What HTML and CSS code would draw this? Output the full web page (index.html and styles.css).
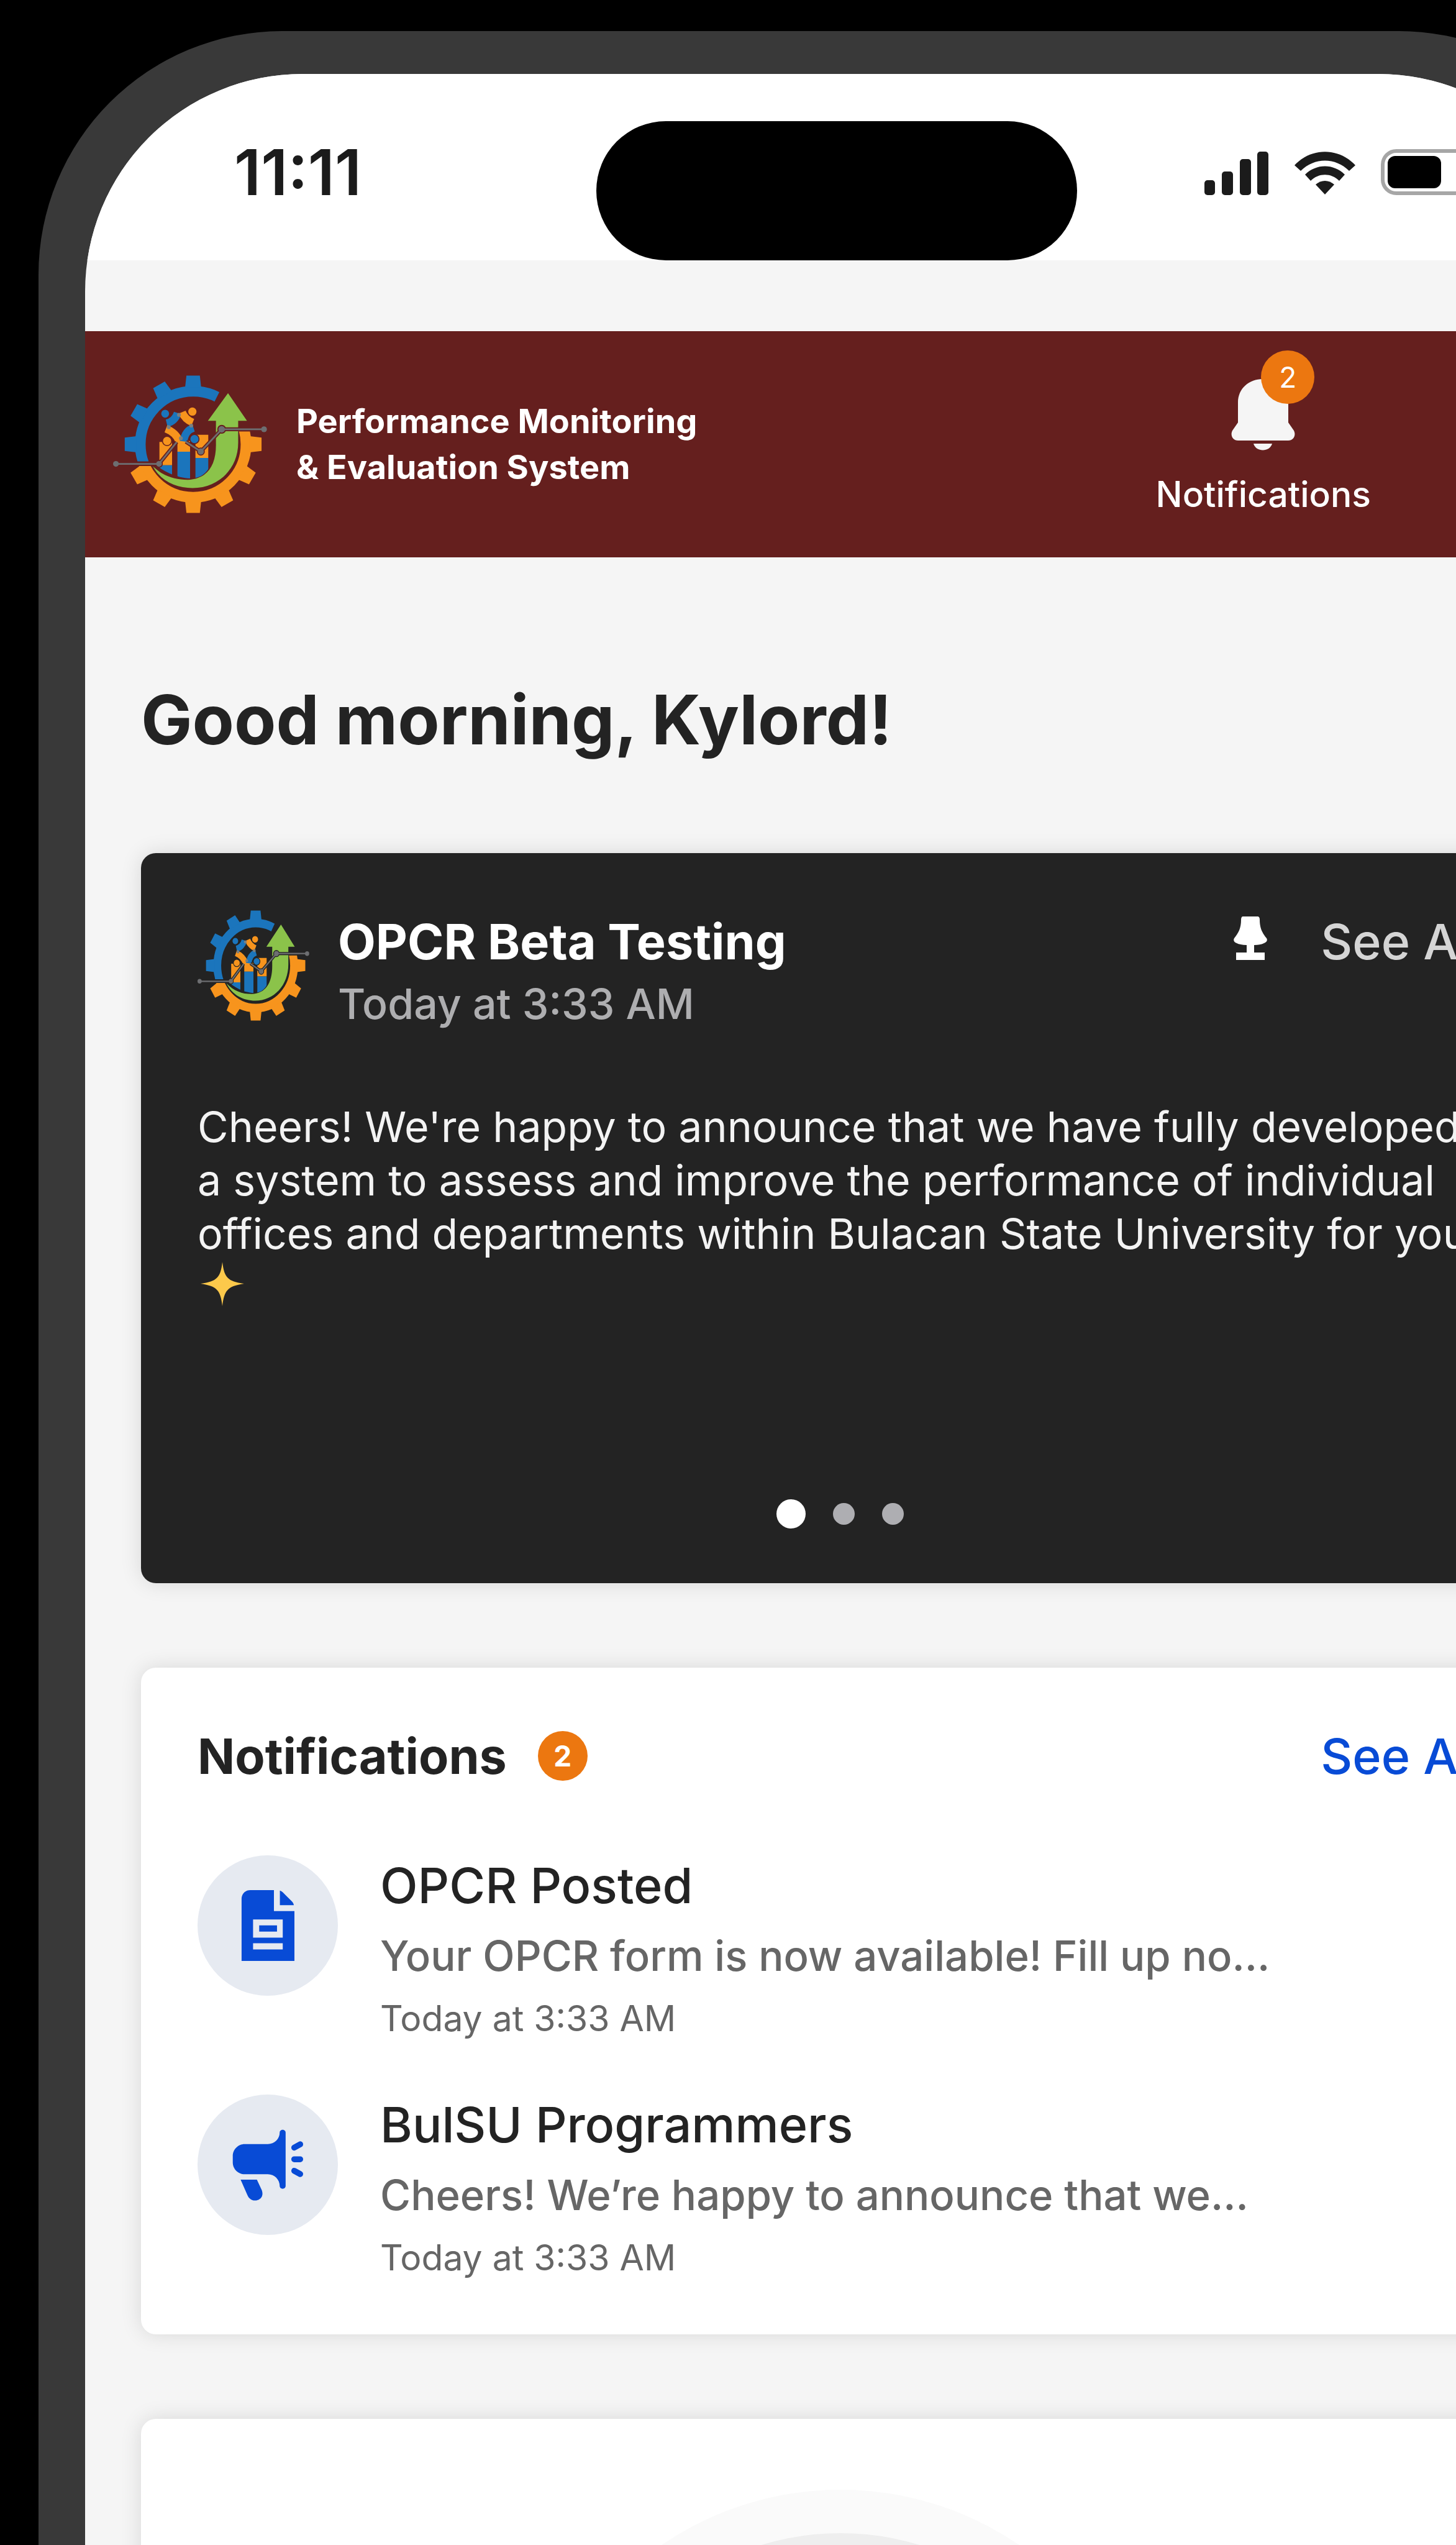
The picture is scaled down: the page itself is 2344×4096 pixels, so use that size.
FILE: index.html
```html
<!DOCTYPE html>
<html lang="en">
<head>
<meta charset="utf-8">
<meta name="viewport" content="width=device-width, initial-scale=1">
<title>Performance Monitoring &amp; Evaluation System</title>
<link rel="stylesheet" href="styles.css">
</head>
<body>
<svg class="defs" aria-hidden="true">
  <defs>
    <clipPath id="clip-blue"><path d="M0 0H693L468 447V537H0Z"/></clipPath>
    <clipPath id="clip-orange"><path d="M0 560H468V380H900V900H0Z"/></clipPath>
    <clipPath id="clip-bars"><path d="M280 380H560V555C530 612 495 624 452 625C400 622 340 605 280 560Z"/></clipPath>
    <path id="tooth" d="M433 90H503L510 152H426Z"/>
    <g id="logo">
      <g clip-path="url(#clip-blue)" fill="#1b75bc">
        <circle cx="468" cy="447" r="276" fill="none" stroke="#1b75bc" stroke-width="56"/>
        <use href="#tooth"/>
        <use href="#tooth" transform="rotate(-30 468 447)"/>
        <use href="#tooth" transform="rotate(-60 468 447)"/>
        <use href="#tooth" transform="rotate(-90 468 447)"/>
      </g>
      <g clip-path="url(#clip-orange)" fill="#f7941d">
        <circle cx="468" cy="447" r="276" fill="none" stroke="#f7941d" stroke-width="56"/>
        <use href="#tooth" transform="rotate(90 468 447)"/>
        <use href="#tooth" transform="rotate(120 468 447)"/>
        <use href="#tooth" transform="rotate(150 468 447)"/>
        <use href="#tooth" transform="rotate(180 468 447)"/>
        <use href="#tooth" transform="rotate(210 468 447)"/>
        <use href="#tooth" transform="rotate(240 468 447)"/>
      </g>
      <g clip-path="url(#clip-bars)">
        <path fill="#f7941d" d="M292 435H358V556H292ZM386 430H452V486H386ZM480 398H547V518H480Z"/>
        <path fill="#1b75bc" d="M292 556H358V640H292ZM386 486H452V640H386ZM480 518H547V640H480Z"/>
      </g>
      <g fill="none" stroke-width="40">
        <path stroke="#1b75bc" d="M387 284C378 312 362 330 330 338"/>
        <path stroke="#f7941d" d="M410 280C420 304 436 322 466 334"/>
        <path stroke="#f7941d" d="M326 366C362 380 384 402 396 432"/>
        <path stroke="#1b75bc" d="M470 362C440 372 424 392 418 432"/>
      </g>
      <g fill="#7b7f80">
        <circle cx="394" cy="294" r="10"/><circle cx="341" cy="358" r="10"/>
        <circle cx="458" cy="350" r="10"/><circle cx="404" cy="416" r="10"/>
      </g>
      <g class="logo-outline" stroke-width="5">
        <circle cx="322" cy="288" r="23" fill="#1b75bc"/><circle cx="464" cy="277" r="24" fill="#f7941d"/>
        <circle cx="332" cy="430" r="24" fill="#f7941d"/><circle cx="475" cy="420" r="24" fill="#1b75bc"/>
      </g>
      <path fill="#8bc34a" d="M258 562C310 612 370 632 440 632C540 628 590 560 587 440V325H545L650 181L749 325H703V440C703 575 600 675 465 675C380 675 300 640 258 562Z"/>
      <g class="logo-outline" fill="none" stroke-width="20">
        <path d="M290 549L382 436M430 434L508 485L617 369H720M240 549H290"/>
        <circle cx="290" cy="549" r="10"/><circle cx="508" cy="485" r="11"/><circle cx="617" cy="369" r="13"/>
      </g>
      <path fill="none" stroke="#6d6e71" stroke-width="9" d="M65 549H290L382 436M430 434L508 485L617 369H838"/>
      <g fill="#6d6e71">
        <circle cx="65" cy="549" r="15"/><circle cx="290" cy="549" r="15"/><circle cx="508" cy="485" r="16"/>
        <circle cx="617" cy="369" r="17"/><circle cx="838" cy="369" r="15"/>
      </g>
    </g>
  </defs>
</svg>

<div class="phone">
  <div class="screen">
    <div class="statusbar">
      <time class="clock">11:11</time>
      <div class="island"></div>
      <div class="indicators" aria-hidden="true">
        <svg width="104" height="70" viewBox="0 0 104 70" fill="#1b1b1b">
          <rect x="0" y="46" width="17" height="24" rx="5"/><rect x="28" y="32" width="18" height="38" rx="5"/>
          <rect x="57" y="12" width="18" height="58" rx="5"/><rect x="85" y="0" width="18" height="70" rx="5"/>
        </svg>
        <svg width="98" height="70" viewBox="0 0 98 70" fill="#1b1b1b">
          <path d="M0 22C27 -7 71 -7 98 22L88 31C66 9 32 9 10 31Z"/>
          <path d="M17 37C35 19 63 19 81 37L72 47C59 34 39 34 26 47Z"/>
          <path d="M34 53C43 45 55 45 64 53L49 69Z"/>
        </svg>
        <svg width="162" height="74" viewBox="0 0 162 74">
          <rect x="3" y="3" width="144" height="68" rx="22" fill="#fff" stroke="#a6a6a6" stroke-width="6"/>
          <rect x="11" y="11" width="86" height="52" rx="12"/>
          <path d="M154 25C165 31 165 43 154 49Z" fill="#a6a6a6"/>
        </svg>
      </div>
    </div>

    <header class="appbar">
      <a class="brand" href="#">
        <svg class="brand-logo" viewBox="50 88 804 718" preserveAspectRatio="none" aria-hidden="true"><use href="#logo"/></svg>
        <span class="brand-name">Performance Monitoring<br>&amp; Evaluation System</span>
      </a>
      <button class="nav-item" type="button">
        <span class="bell">
          <svg width="103" height="122" viewBox="0 -7 103 122" fill="#f5f5f5" aria-hidden="true">
            <path d="M51 0C29 0 11 15 11 38V70L2 83C-2 91 3 99 11 99H92C100 99 105 91 101 83L92 70V38C92 15 74 0 51 0Z"/>
            <path d="M36 104H66C62 118 40 118 36 104Z"/>
          </svg>
          <span class="badge bell-badge">2</span>
        </span>
        <span>Notifications</span>
      </button>
    </header>

    <main class="content">
      <h1 class="greeting">Good morning, Kylord!</h1>

      <section class="card announcement">
        <div class="post-head">
          <svg class="post-logo" viewBox="50 88 804 718" preserveAspectRatio="none" aria-hidden="true"><use href="#logo"/></svg>
          <div class="post-meta">
            <h2 class="title">OPCR Beta Testing</h2>
            <time class="post-time">Today at 3:33 AM</time>
          </div>
          <div class="post-actions">
            <svg width="54" height="80" viewBox="0 0 54 80" fill="#fff" aria-hidden="true">
              <path d="M15 0H38C41 0 42 2 42 5C42 19 46 26 53 35C56 40 51 45 33 46V58H50V70H4V58H21V46C3 45 -2 40 1 35C8 26 12 19 12 5C12 2 13 0 15 0Z"/>
            </svg>
            <a class="see-all see-all-light" href="#">See All</a>
          </div>
        </div>
        <p class="post-body">Cheers! We're happy to announce that we have fully developed<br>a system to assess and improve the performance of individual<br>offices and departments within Bulacan State University for you<br><svg class="star" width="76" height="75" viewBox="-5 -3 76 75" aria-hidden="true"><path fill="#fcc94b" d="M35 0C38 25 43 31 70 35C43 39 38 46 35 71C32 46 27 39 0 35C27 31 32 25 35 0Z"/></svg></p>
        <div class="dots">
          <button class="dot dot-active" type="button" aria-label="Announcement 1"></button>
          <button class="dot" type="button" aria-label="Announcement 2"></button>
          <button class="dot" type="button" aria-label="Announcement 3"></button>
        </div>
      </section>

      <section class="card notifications">
        <div class="section-head">
          <h2 class="title">Notifications</h2>
          <span class="badge section-badge">2</span>
          <a class="see-all" href="#">See All</a>
        </div>
        <ul class="list">
          <li class="item">
            <svg class="item-icon" viewBox="8 27 733 733" aria-hidden="true">
              <g fill="#084bd6">
                <path fill-rule="evenodd" d="M283 209H407V318H514V578H238V254C238 228 258 209 283 209ZM298 362V457H453V362ZM298 486V518H453V486Z"/>
                <path d="M330 393H423V425H330ZM438 211C444 213 449 216 454 221L501 268C506 273 509 279 511 287H438Z"/>
              </g>
            </svg>
            <div class="item-text">
              <h3 class="item-title">OPCR Posted</h3>
              <p class="item-preview">Your OPCR form is now available! Fill up no...</p>
              <time class="item-time">Today at 3:33 AM</time>
            </div>
          </li>
          <li class="item">
            <svg class="item-icon" viewBox="8 14 733 733" aria-hidden="true">
              <g fill="#084bd6">
                <path d="M254 273H375C410 273 437 245 437 213C437 193 468 193 468 213V491C468 511 437 511 437 491C437 458 410 430 375 430H254C220 430 192 402 192 368V335C192 301 220 273 254 273Z"/>
                <path d="M233 458H318L344 514C357 554 325 568 307 567C290 567 276 556 269 540Z"/>
                <path fill="none" stroke="#084bd6" stroke-width="31" stroke-linecap="round" d="M513 291L544 274M513 352H544M513 412L544 429"/>
              </g>
            </svg>
            <div class="item-text">
              <h3 class="item-title">BulSU Programmers</h3>
              <p class="item-preview">Cheers! We’re happy to announce that we...</p>
              <time class="item-time">Today at 3:33 AM</time>
            </div>
          </li>
        </ul>
      </section>

      <section class="card chart">
        <svg class="gauge" viewBox="0 0 1020 1020" aria-hidden="true">
          <circle cx="510" cy="510" r="510" fill="#fafafa"/>
          <circle cx="510" cy="510" r="440" fill="#eee"/>
        </svg>
      </section>
    </main>
  </div>
</div>
</body>
</html>
```
FILE: styles.css
```css
:root {
  --maroon: #651f1e;
  --orange: #ec7710;
  --blue: #084bd6;
  --ink: #232323;
  --page: #f5f5f5;
}

* { box-sizing: border-box; margin: 0; padding: 0; }

body {
  height: 100vh;
  overflow: hidden;
  background: #000;
  color: var(--ink);
  font-family: Inter, "Liberation Sans", sans-serif;
}

button { border: 0; background: none; color: inherit; font: inherit; cursor: pointer; }
a { color: inherit; text-decoration: none; }
svg { display: block; flex-shrink: 0; }

.defs { position: absolute; width: 0; height: 0; }
.logo-outline { stroke: var(--logo-bg); }

/* The handset runs past the right and bottom edges of the window. */
.phone {
  margin: 50px -300px 0 62px;
  padding: 69px 75px;
  border-radius: 392px;
  background: #393939;
}

.screen {
  overflow: hidden;
  border-radius: 350px;
  background: var(--page);
}

.statusbar {
  position: relative;
  display: flex;
  align-items: center;
  justify-content: space-between;
  height: 300px;
  padding: 16px 184px 0 240px;
  background: #fff;
}

.clock { color: #1b1b1b; font-size: 102px; font-weight: 600; line-height: 96px; }

.island {
  position: absolute;
  top: 76px;
  left: 823px;
  width: 774px;
  height: 224px;
  border-radius: 112px;
  background: #000;
}

.indicators { display: flex; align-items: flex-end; gap: 41px; }

.appbar {
  --logo-bg: var(--maroon);
  display: flex;
  align-items: center;
  justify-content: space-between;
  height: 364px;
  margin-top: 114px;
  padding: 0 362px 0 45px;
  background: var(--maroon);
  color: #fff;
}

.brand { display: flex; align-items: center; gap: 47px; }
.brand-logo { width: 248px; height: 222px; }
.brand-name { font-size: 54px; font-weight: 700; line-height: 74px; }

.nav-item {
  display: flex;
  flex-direction: column;
  align-items: center;
  gap: 40px;
  font-size: 57px;
  font-weight: 500;
  line-height: 62px;
}

.bell { position: relative; }

.badge {
  display: flex;
  align-items: center;
  justify-content: center;
  border-radius: 50%;
  background: var(--orange);
  color: #fff;
  line-height: 56px;
}

.bell-badge { position: absolute; top: -39px; left: 48px; width: 86px; height: 86px; font-size: 46px; font-weight: 400; }

.content { display: flex; flex-direction: column; padding: 195px 91px 400px 90px; }
.greeting { margin-bottom: 149px; font-size: 110px; font-weight: 700; line-height: 132px; }

.card {
  margin-bottom: 136px;
  padding: 92px 91px 88px;
  border-radius: 24px;
  background: #fff;
  box-shadow: 0 0 34px rgba(0, 0, 0, .12);
}

.title { font-size: 79px; font-weight: 700; line-height: 100px; }

.see-all { color: var(--blue); font-size: 79px; font-weight: 500; line-height: 100px; }
.see-all-light { color: #d5d5d5; }

.announcement {
  --logo-bg: var(--ink);
  display: flex;
  flex-direction: column;
  min-height: 1175px;
  background: var(--ink);
  color: #fff;
}

.post-head { display: flex; align-items: flex-start; gap: 46px; }
.post-logo { width: 180px; height: 178px; }
.post-meta { flex: 1; }
.post-time { display: block; color: #aeaeb0; font-size: 68px; font-weight: 500; line-height: 100px; }
.post-actions { display: flex; align-items: center; gap: 86px; }
.post-body { margin-top: 105px; color: #f3f3f3; font-size: 68px; font-weight: 400; line-height: 86px; white-space: nowrap; }
.star { display: inline-block; vertical-align: top; }

.dots { display: flex; align-items: center; justify-content: center; gap: 44px; margin-top: auto; }
.dot { width: 35px; height: 35px; border-radius: 50%; background: #aeaeb2; }
.dot-active { width: 47px; height: 47px; background: #fff; }

.section-head { display: flex; align-items: center; }
.section-head .see-all { margin-left: auto; }
.section-badge { width: 80px; height: 80px; margin-left: 50px; font-size: 46px; font-weight: 700; }

.list { display: flex; flex-direction: column; gap: 87px; margin-top: 110px; list-style: none; }
.item { display: flex; gap: 68px; }
.item-icon { width: 226px; height: 226px; border-radius: 50%; background: #e6eaf1; }
.item-text { display: flex; flex-direction: column; gap: 16px; }
.item-title { font-size: 79px; font-weight: 500; line-height: 96px; }
.item-preview { color: #666; font-size: 67px; font-weight: 500; line-height: 100px; }
.item-time { color: #666; font-size: 57px; line-height: 70px; }

.chart { padding-top: 114px; }
.gauge { width: 1020px; margin: 0 auto; }
```
